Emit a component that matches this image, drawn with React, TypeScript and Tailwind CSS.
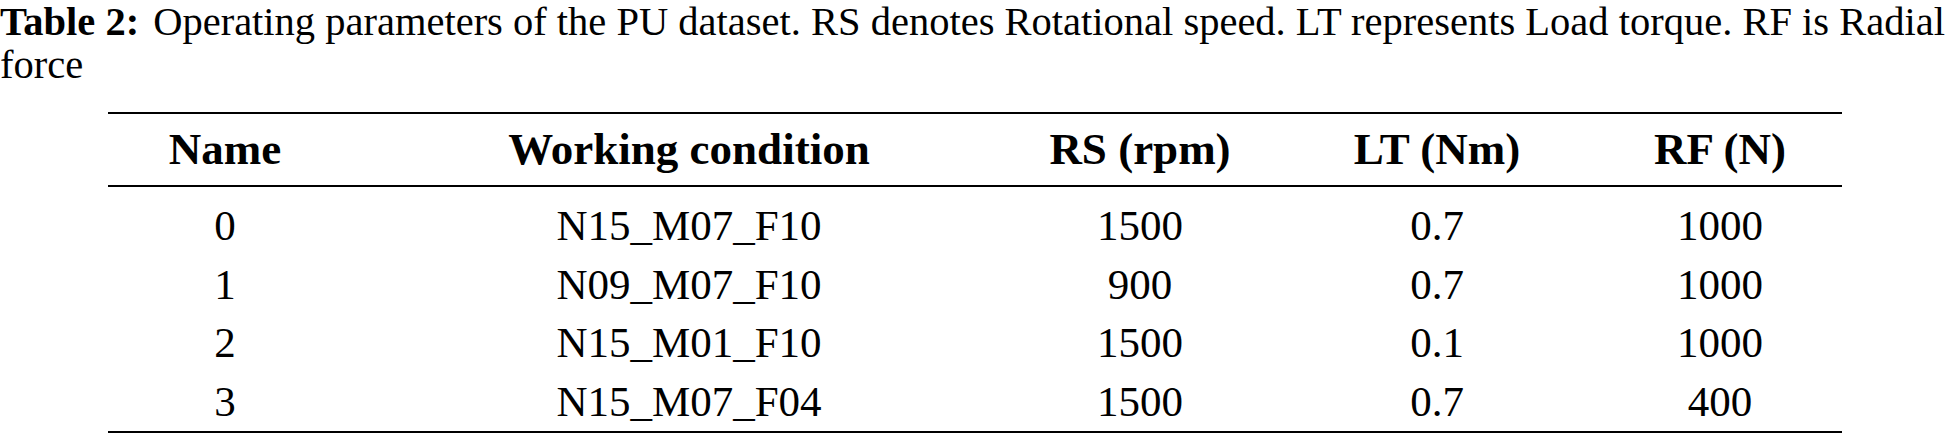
import React from 'react';

const rows = [
  ['0', 'N15_M07_F10', '1500', '0.7', '1000'],
  ['1', 'N09_M07_F10', '900', '0.7', '1000'],
  ['2', 'N15_M01_F10', '1500', '0.1', '1000'],
  ['3', 'N15_M07_F04', '1500', '0.7', '400'],
];

const headers = ['Name', 'Working condition', 'RS (rpm)', 'LT (Nm)', 'RF (N)'];

const cols = 'grid grid-cols-[234px_694px_208px_386px_180px_32px]';

export default function App() {
  return (
    <div className="w-[1951px] h-[436px] bg-white text-black overflow-hidden font-['Liberation_Serif',serif]">
      {/* Caption */}
      <div className="text-[40.5px] leading-[43px]">
        <div className="whitespace-nowrap">
          <span className="font-bold">Table 2:</span>
          <span className="ml-[14px]">
            Operating parameters of the PU dataset. RS denotes Rotational speed. LT represents Load torque. RF is Radial
          </span>
        </div>
        <div>force</div>
      </div>

      {/* Table */}
      <div className="ml-[108px] w-[1734px] mt-[26px]">
        <div className={`${cols} border-t-2 border-b-2 border-black h-[75px] items-center font-bold text-[45px]`}>
          {headers.map((h) => (
            <div key={h} className="text-center">{h}</div>
          ))}
        </div>
        <div className="pt-[7px] pb-[3px] border-b-2 border-black text-[43px]">
          {rows.map((r) => (
            <div key={r[0]} className={`${cols} h-[58.5px] items-center`}>
              {r.map((c, i) => (
                <div key={i} className="text-center">{c}</div>
              ))}
            </div>
          ))}
        </div>
      </div>
    </div>
  );
}
